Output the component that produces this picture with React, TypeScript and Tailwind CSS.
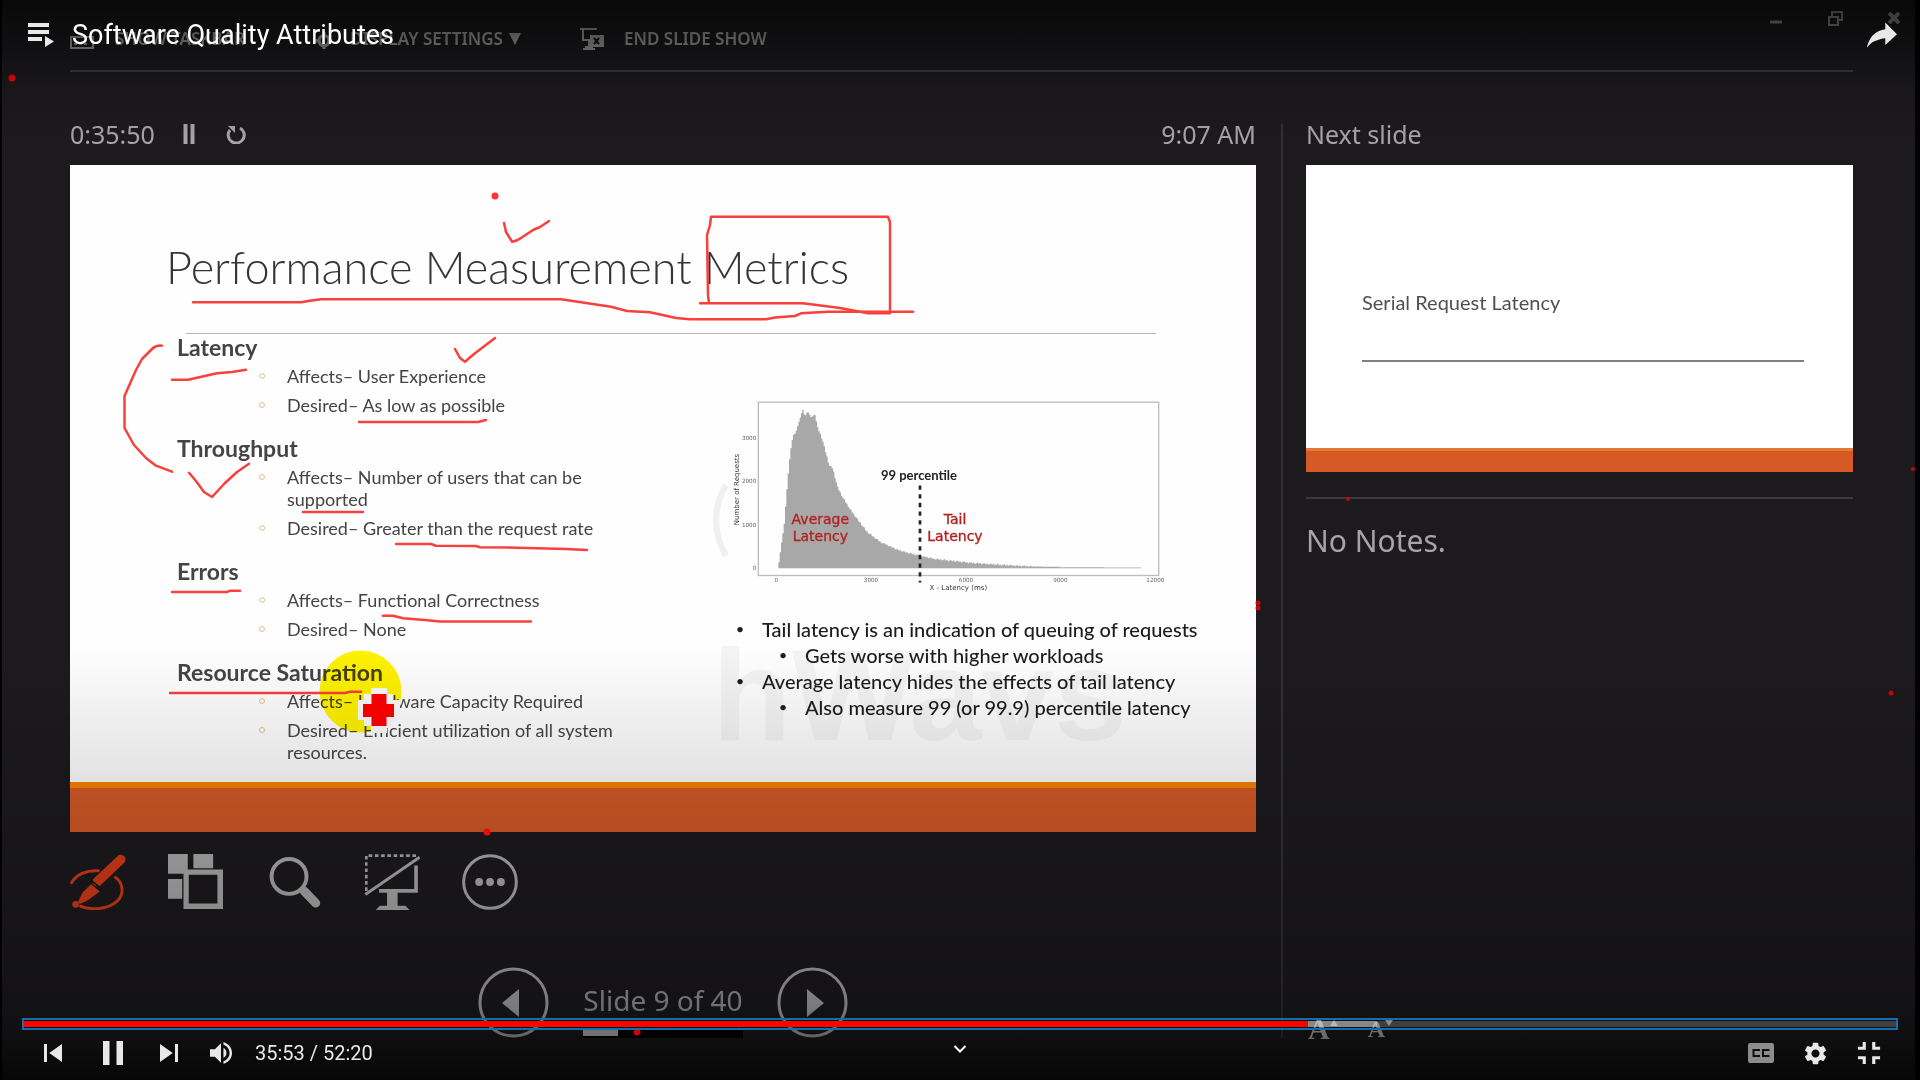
import React from "react";
import { MdFullscreenExit, MdSettings } from "react-icons/md";

const metrics = [
  { name: "Latency", items: ["Affects– User Experience", "Desired– As low as possible"] },
  { name: "Throughput", items: ["Affects– Number of users that can be supported", "Desired– Greater than the request rate"] },
  { name: "Errors", items: ["Affects– Functional Correctness", "Desired– None"] },
  { name: "Resource Saturation", items: ["Affects– Hardware Capacity Required", "Desired– Efficient utilization of all system resources."] },
];

const inkStrokes = [
  "M504 223L506 232L512 241.7Q517 241 521 238L533 230L540 227L549 221",
  "M193 302.3H301L308 301L321 299.3H561L611 306.7L627 311L650 312.3L676 318L690 319.3H766L775 317.5L795 316L801 313.3L828 311.7H913",
  "M700 303.3H803L840 308L868 313.3H890V222L888 216.7H711L710 225L707 235L708 295L709 303",
  "M455 349L460 358L465 361.7L474 354L495 338",
  "M172 379.7H188L217 373.3L232 372L246 369.7",
  "M162 345.7Q156 345 152 349L142 359L136 370L124.5 396V428L134 445L146 458L156 465.7L172 471.7",
  "M359 422H478L486 420",
  "M189 472.7L196 481L204 492L212 497L225 483L237 472L249 463.7",
  "M303 512H363",
  "M396 544H431L436 545.7L476 546L480 547.3L517 547.7L566 549L587 550",
  "M172 592H227L230 590.7H240",
  "M383 615.7H393L403 618.3L425 620L440 621.5H531",
  "M170 693H345L350 691.7H361",
];

const curve: [number, number][] = [
  [234, 545], [240, 500], [250, 430], [260, 300], [268, 215], [276, 165], [284, 158], [292, 130], [302, 98], [306, 88], [312, 108],
  [320, 92], [330, 110], [342, 103], [350, 140], [365, 180], [385, 255], [395, 263], [410, 320], [425, 350], [450, 390],
  [480, 430], [500, 455], [540, 485], [590, 508], [640, 522], [700, 535], [800, 546], [900, 553], [1000, 558], [1100, 560], [1320, 561],
];

function heightAt(x: number) {
  const i = curve.findIndex((p) => p[0] >= x);
  if (i <= 0) return curve[0][1];
  const [x0, y0] = curve[i - 1];
  const [x1, y1] = curve[i];
  return y0 + ((x - x0) / (x1 - x0)) * (y1 - y0);
}

function histogramPath() {
  let d = "M234 563";
  for (let x = 234; x < 1320; x += 4) {
    const wobble = x > 350 && x < 1000 ? ((x * 7) % 5) - 2 : 0;
    d += `V${Math.round(heightAt(x) + wobble)}H${x + 4}`;
  }
  return d + "V563Z";
}

function LatencyChart() {
  return (
    <svg viewBox="80 50 1320 590" className="block h-[197px] w-[440px]" role="img" aria-label="Latency histogram">
      <rect x="174" y="65" width="1201" height="520" fill="none" stroke="#bdbdbd" strokeWidth="4" />
      <path d={histogramPath()} fill="#a9a8a9" />
      <path d="M659 315V606" stroke="#222" strokeWidth="8" strokeDasharray="13 13" />
      <g fontFamily="DejaVu Sans" fontSize="17" fill="#666">
        <g textAnchor="end">
          <text x="168" y="178">3000</text>
          <text x="168" y="308">2000</text>
          <text x="168" y="439">1000</text>
          <text x="168" y="569">0</text>
        </g>
        <g textAnchor="middle">
          <text x="228" y="605">0</text>
          <text x="512" y="605">3000</text>
          <text x="797" y="605">6000</text>
          <text x="1080" y="605">9000</text>
          <text x="1365" y="605">12000</text>
        </g>
      </g>
      <g fontFamily="DejaVu Sans" fontSize="21" fill="#333" textAnchor="middle">
        <text x="774" y="628">X - Latency (ms)</text>
        <text transform="translate(117 327) rotate(-90)">Number of Requests</text>
      </g>
      <text x="656" y="297" textAnchor="middle" fontFamily="Lato" fontWeight="700" fontSize="39" fill="#222">99 percentile</text>
      <g fontFamily="DejaVu Sans" fontSize="42" fill="#b3201f" stroke="#b3201f" strokeWidth="1" textAnchor="middle">
        <text x="360" y="431">Average</text>
        <text x="360" y="482">Latency</text>
        <text x="764" y="431">Tail</text>
        <text x="764" y="482">Latency</text>
      </g>
    </svg>
  );
}

function Takeaway({ nested, children }: { nested?: boolean; children: React.ReactNode }) {
  return (
    <li className={nested ? "flex pl-[52px]" : "flex pl-[9px]"}>
      <span className="w-[26px] shrink-0 text-[14px]">•</span>
      <span className="whitespace-nowrap">{children}</span>
    </li>
  );
}

function CurrentSlide() {
  return (
    <article className="relative flex min-h-[667px] flex-col bg-[#fefefe] font-['Lato',sans-serif] text-[#444346]">
      <svg viewBox="70 165 1186 667" className="absolute inset-0 h-full w-full" aria-hidden="true">
        <path d="M726 485Q706 520 726 556" fill="none" stroke="#f0f0f0" strokeWidth="6" />
        <text x="712" y="740" fontFamily="Liberation Sans" fontWeight="700" fontSize="130" fill="#f4f4f4">hWavs</text>
      </svg>
      <div className="relative flex flex-1 flex-col pt-[72px]">
        <h1 className="pl-[96px] text-[45px] leading-[60px] font-light text-[#353437]">Performance Measurement Metrics</h1>
        <hr className="mt-[36px] mr-[100px] -mb-px ml-[116px] border-t border-[#b5b5b5]" />
        <div className="grid grid-cols-[657fr_529fr]">
          <div className="pl-[107px]">
            {metrics.map((m) => (
              <section key={m.name} className="mb-[18px]">
                <h2 className="mb-1 text-[23px] leading-7 font-bold">{m.name}</h2>
                <ul className="flex flex-col gap-[7px]">
                  {m.items.map((item) => (
                    <li key={item} className="flex text-[18px] leading-[22px]">
                      <span className="mt-2 mr-[22px] ml-[82px] size-[6px] shrink-0 rounded-full border border-[#e3bf93]" />
                      <span className="max-w-[345px]">{item}</span>
                    </li>
                  ))}
                </ul>
              </section>
            ))}
          </div>
          <div className="pt-16">
            <LatencyChart />
            <ul className="mt-[22px] text-[20px] leading-[26px] font-medium text-[#1c1c1c]">
              <Takeaway>Tail latency is an indication of queuing of requests</Takeaway>
              <Takeaway nested>Gets worse with higher workloads</Takeaway>
              <Takeaway>Average latency hides the effects of tail latency</Takeaway>
              <Takeaway nested>Also measure 99 (or 99.9) percentile latency</Takeaway>
            </ul>
          </div>
        </div>
      </div>
      <div className="h-[50px] border-t-[6px] border-[#fb8200] bg-[#d65a28]" />
      <svg viewBox="70 165 1186 667" className="absolute inset-0 h-full w-full mix-blend-multiply" aria-hidden="true">
        <circle cx="360.500" cy="691.500" r="41" fill="#fff200" />
      </svg>
      <svg viewBox="70 165 1186 667" className="absolute inset-0 h-full w-full" aria-hidden="true">
        <g fill="none" stroke="#f8403c" strokeWidth="2.500" strokeLinecap="round" strokeLinejoin="round">
          {inkStrokes.map((d) => (
            <path key={d} d={d} />
          ))}
        </g>
        <path d="M371 688h16v6h6v6h7v20h-7v6h-6v7h-16v-7h-7v-6h-6v-20h6v-6h7z" fill="#fafafa" />
        <path d="M371.500 694h15v10h7.500v13h-7.500v9h-15v-9h-8.500v-13h8.500z" fill="#ff0000" />
      </svg>
    </article>
  );
}

function SlideTools() {
  const button = "size-14";
  return (
    <div className="mt-[22px] flex gap-[42px] text-[#b0b0b0]">
      <button className={button} aria-label="Pen and laser pointer tools">
        <svg viewBox="0 0 170 170" className="size-full" fill="none" stroke="#db3c17">
          <path d="M5 87C18 62 50 48 86 51M138 71C164 90 164 124 142 144C116 168 66 172 32 158" strokeWidth="9" strokeLinecap="round" />
          <path d="M154 17L83 84" strokeWidth="29" strokeLinecap="round" />
          <path d="M64 92L90 114L56 140L30 152L24 146L38 117Z" fill="#db3c17" stroke="none" />
          <path d="M62 78L98 108" stroke="#171618" strokeWidth="5" />
          <circle cx="17" cy="153" r="10" fill="#db3c17" stroke="none" />
        </svg>
      </button>
      <button className={button} aria-label="See all slides">
        <svg viewBox="0 0 170 170" className="size-full" fill="currentColor">
          <path d="M0 0h60v60H0zM77 0h60v43H77zM0 76h43v60H0z" />
          <path fillRule="evenodd" d="M47 47h120v120H47zM63 63v87h87V63z" />
        </svg>
      </button>
      <button className={button} aria-label="Zoom into the slide">
        <svg viewBox="0 0 170 170" className="size-full" fill="none" stroke="currentColor">
          <circle cx="70" cy="68" r="53" strokeWidth="12" />
          <path d="M107 104L118 115" strokeWidth="16" />
          <path d="M116 113L151 149" strokeWidth="27" strokeLinecap="round" />
        </svg>
      </button>
      <button className={button} aria-label="Black or unblack slide show">
        <svg viewBox="0 0 170 170" className="size-full" fill="none" stroke="currentColor">
          <path d="M7 112V5H158" strokeWidth="8" strokeDasharray="11 8" />
          <path d="M4 123L169 10" strokeWidth="9" />
          <path d="M158 35V112H46" strokeWidth="11" />
          <path d="M70 112h32v45h24l12 13H36l12-13h22z" fill="currentColor" stroke="none" />
        </svg>
      </button>
      <button className={button} aria-label="More slide show options">
        <svg viewBox="0 0 170 170" className="size-full" fill="currentColor">
          <circle cx="85" cy="85" r="80" fill="none" stroke="currentColor" strokeWidth="9" />
          <circle cx="52" cy="85" r="12" />
          <circle cx="85" cy="85" r="12" />
          <circle cx="118" cy="85" r="12" />
        </svg>
      </button>
    </div>
  );
}

function PresenterToolbar() {
  const item = "flex items-center text-[17px] leading-6 font-semibold";
  return (
    <header className="flex h-[72px] justify-between border-b-2 border-[#3f3f3f] text-[#a8a8a8]">
      <div className="flex pt-[27px]">
        <button className={`${item} h-6 w-[244px] gap-[21px]`}>
          <svg viewBox="0 0 24 24" className="size-6" fill="none" stroke="currentColor" strokeWidth="2">
            <path d="M1 10h22v11H1zM4 17h3M9 17h3M14 17h3" />
          </svg>
          SHOW TASKBAR
        </button>
        <button className={`${item} h-6 w-[266px] gap-[16px]`}>
          <svg viewBox="0 0 24 24" className="size-5" fill="none" stroke="currentColor" strokeWidth="4">
            <circle cx="12" cy="14" r="6" />
            <path d="M12 4v4M12 20v4M2 14h4M18 14h4" />
          </svg>
          <span className="flex items-center gap-[6px]">
            DISPLAY SETTINGS
            <svg viewBox="0 0 12 12" className="size-3" fill="currentColor"><path d="M0 0h12L6 12z" /></svg>
          </span>
        </button>
        <button className={`${item} h-6 gap-[20px]`}>
          <svg viewBox="0 0 24 24" className="size-6" fill="none" stroke="currentColor" strokeWidth="2">
            <path d="M0 2h17M3 3v10h7M9 13v7M3 22h12M5 20h8" />
            <rect x="11" y="9" width="12" height="10" fill="currentColor" />
            <path d="M14 11l5 6M19 11l-5 6" stroke="#111" />
          </svg>
          END SLIDE SHOW
        </button>
      </div>
      <div className="-mr-[47px] flex gap-[47px] pt-3 text-[#959595]">
        <button className="h-3 w-3" aria-label="Minimize">
          <svg viewBox="0 0 12 12" className="size-3"><path d="M0 10h12" stroke="currentColor" strokeWidth="3" /></svg>
        </button>
        <button className="h-3 w-3" aria-label="Restore">
          <svg viewBox="0 0 12 12" className="size-3 overflow-visible" fill="none" stroke="currentColor" strokeWidth="2">
            <path d="M0 5h9v8H0zM3 4V0h10v8h-3" />
          </svg>
        </button>
        <button className="h-3 w-3" aria-label="Close">
          <svg viewBox="0 0 12 12" className="size-3"><path d="M1 1l10 10M11 1L1 11" stroke="currentColor" strokeWidth="4" /></svg>
        </button>
      </div>
    </header>
  );
}

function NavButton({ label, d }: { label: string; d: string }) {
  return (
    <button aria-label={label} className="size-[71px] text-[#b5b5b5]">
      <svg viewBox="0 0 71 71" className="size-full">
        <circle cx="35.500" cy="35.500" r="33.500" fill="none" stroke="currentColor" strokeWidth="3" />
        <path d={d} fill="currentColor" />
      </svg>
    </button>
  );
}

function PresenterView() {
  return (
    <main className="col-start-1 row-start-1 flex flex-col border-r-[5px] border-l-2 border-black bg-[#1c1a1d] pr-[62px] pl-[68px] font-['Noto_Sans',sans-serif] text-[#a5a5a5]">
      <PresenterToolbar />
      <div className="mt-[52px] grid flex-1 grid-cols-[1186fr_597fr] pb-[42px]">
        <section>
          <div className="mb-[21px] flex h-5 items-center justify-between text-[25px] leading-5">
            <div className="flex items-center">
              <span className="w-[112px]">0:35:50</span>
              <button aria-label="Pause timer">
                <svg viewBox="0 0 14 20" className="h-5 w-[14px]"><path d="M3.500 0v20M10.500 0v20" stroke="currentColor" strokeWidth="4" /></svg>
              </button>
              <button aria-label="Restart timer" className="ml-[30px]">
                <svg viewBox="0 0 20 20" className="size-5" fill="none" stroke="currentColor" strokeWidth="3">
                  <path d="M14 4A8 8 0 1 1 4 6" />
                  <path d="M2 2h7v7z" fill="currentColor" stroke="none" />
                </svg>
              </button>
            </div>
            <span>9:07 AM</span>
          </div>
          <CurrentSlide />
          <SlideTools />
          <div className="mt-[57px] flex justify-center gap-[34px]">
            <NavButton label="Previous slide" d="M24 36L41 22V50Z" />
            <div className="flex flex-col text-[28px]">
              <p className="h-[62px] leading-[66px]">Slide 9 of 40</p>
              <div className="h-[9px] bg-black">
                <div className="h-[7px] w-[22%] bg-[#c8c8c8]" />
              </div>
            </div>
            <NavButton label="Next slide" d="M47 36L30 22V50Z" />
          </div>
        </section>
        <aside className="ml-[25px] flex flex-col border-l-2 border-[#333234] pl-[23px]">
          <h2 className="mb-[21px] text-[25px] leading-5">Next slide</h2>
          <article className="flex min-h-[307px] flex-col bg-white font-['Lato',sans-serif] text-[#505050]">
            <div className="flex-1 pt-[121px] pr-[49px] pl-[56px]">
              <p className="border-b-2 border-[#808080] pb-[42px] text-[20px] leading-[32px]">Serial Request Latency</p>
            </div>
            <div className="h-6 border-t-[3px] border-[#e27a35] bg-[#d65a25]" />
          </article>
          <hr className="mt-[25px] border-t-2 border-[#3a393b]" />
          <p className="mt-[22px] text-[30px] leading-10">No Notes.</p>
          <div className="mt-auto flex items-end gap-[30px] pl-[2px] font-['Liberation_Serif',serif] leading-[18px] font-bold text-[#c0c0c0]">
            <button className="flex text-[30px]" aria-label="Make the text larger">
              A
              <svg viewBox="0 0 8 6" className="h-[6px] w-2" fill="currentColor"><path d="M0 6L4 0L8 6Z" /></svg>
            </button>
            <button className="flex text-[24px]" aria-label="Make the text smaller">
              A
              <svg viewBox="0 0 8 6" className="h-[6px] w-2" fill="currentColor"><path d="M0 0L4 6L8 0Z" /></svg>
            </button>
          </div>
        </aside>
      </div>
    </main>
  );
}

function Scrim() {
  return (
    <div className="pointer-events-none relative col-start-1 row-start-1 bg-[linear-gradient(to_bottom,rgba(0,0,0,.68)_0%,rgba(0,0,0,.45)_4%,rgba(0,0,0,.15)_8%,rgba(0,0,0,0)_13%,rgba(0,0,0,0)_60%,rgba(0,0,0,.11)_72%,rgba(0,0,0,.2)_83%,rgba(0,0,0,.32)_93%,rgba(0,0,0,.45)_96%,rgba(0,0,0,.75)_100%)]">
      <svg viewBox="0 0 1920 1080" preserveAspectRatio="none" className="absolute inset-0 h-full w-full" fill="#c80505" aria-hidden="true">
        <circle cx="12" cy="78" r="3.500" />
        <circle cx="495" cy="196" r="3.500" fill="#ff3333" />
        <circle cx="487" cy="832" r="3.500" fill="#e80c0c" />
        <circle cx="637" cy="1032" r="3.500" />
        <circle cx="1258" cy="603" r="2.500" />
        <circle cx="1258" cy="608" r="2.500" />
        <circle cx="1348" cy="499" r="2" />
        <circle cx="1913" cy="469" r="2" />
        <circle cx="1891" cy="693" r="2.500" />
      </svg>
    </div>
  );
}

function PlayerChrome() {
  return (
    <div className="relative col-start-1 row-start-1 flex flex-col justify-between font-['Roboto',sans-serif] text-[#e8e8e8]">
      <div className="flex items-center justify-between pt-2 pr-[11px] pl-7">
        <div className="flex items-center gap-[18px]">
          <button aria-label="Playlist">
            <svg viewBox="0 0 26 26" className="size-[26px]" fill="currentColor">
              <path d="M0 1h21v4H0zM0 8h21v4H0zM0 15h14v4H0zM17 14v11l9-5.500z" />
            </svg>
          </button>
          <a href="#video" className="text-[27px] leading-10 text-white">Software Quality Attributes</a>
        </div>
        <button aria-label="Share">
          <svg viewBox="0 0 36 36" className="size-[54px]" fill="currentColor">
            <path d="m20.200 14.190 0-4.450 7.790 7.790-7.790 7.160 0-4.560C16.270 20.690 12.100 21.810 9.340 24.760 8.800 25.130 7.600 27.290 8.120 25.650 9.080 21.320 11.800 17.180 15.980 15.380c1.330-.6 2.760-.98 4.210-1.190z" />
          </svg>
        </button>
      </div>
      <div className="px-[22px]">
        <div className="flex items-center border-2 border-[#0f70ae] py-px">
          <input
            type="range"
            aria-label="Seek"
            min={0}
            max={3140}
            defaultValue={2153}
            className="m-0 block h-[6px] w-full appearance-none bg-[linear-gradient(to_right,#ff0000_68.6%,rgba(255,255,255,.5)_68.6%,rgba(255,255,255,.5)_72.3%,rgba(255,255,255,.2)_72.3%)] [&::-webkit-slider-thumb]:size-0 [&::-webkit-slider-thumb]:appearance-none"
          />
        </div>
        <div className="mb-1 grid h-[46px] grid-cols-[1fr_auto_1fr] items-center">
          <div className="flex items-center pl-[3px]">
            <button aria-label="Previous video" className="flex w-14 justify-center">
              <svg viewBox="12 12 12 12" className="size-[18px]" fill="currentColor"><path d="M12 12h2v12h-2zM15.500 18l8.500 6V12z" /></svg>
            </button>
            <button aria-label="Pause" className="flex w-16 justify-center">
              <svg viewBox="0 0 20 24" className="h-6 w-5" fill="currentColor"><path d="M0 0h6.500v24H0zM13.500 0H20v24h-6.500z" /></svg>
            </button>
            <button aria-label="Next video" className="flex w-12 justify-center">
              <svg viewBox="12 12 12 12" className="size-[18px]" fill="currentColor"><path d="M12 24l8.500-6L12 12zM22 12v12h2V12z" /></svg>
            </button>
            <button aria-label="Mute" className="flex w-14 justify-center">
              <svg viewBox="8 9 18 18" className="size-[22px]" fill="currentColor">
                <path d="M8 21h4l5 5V10l-5 5H8zM19 14v8c1.480-.68 2.500-2.230 2.500-4 0-1.740-1.020-3.260-2.500-4zM19 11.290c2.890.86 5 3.540 5 6.710s-2.110 5.850-5 6.710v2.060c4.010-.91 7-4.490 7-8.770s-2.990-7.860-7-8.770z" />
              </svg>
            </button>
            <span className="ml-[6px] text-[20px] leading-6">35:53 / 52:20</span>
          </div>
          <button aria-label="More videos" className="mb-2 text-white">
            <svg viewBox="0 0 14 10" className="h-[10px] w-[14px]" fill="none" stroke="currentColor" strokeWidth="2">
              <path d="M1.500 2L7 7.500L12.500 2" />
            </svg>
          </button>
          <div className="flex items-center justify-end pr-[2px]">
            <button aria-label="Subtitles" className="flex w-[54px] justify-center text-[#8c8c8c]">
              <svg viewBox="0 0 26 20" className="h-5 w-[26px]" fill="none">
                <rect width="26" height="20" rx="2" fill="currentColor" />
                <path d="M11 8V7H5.500v6H11v-1M20.500 8V7H15v6h5.500v-1" stroke="#0f0f0f" strokeWidth="2" />
              </svg>
            </button>
            <button aria-label="Settings" className="flex w-[54px] justify-center">
              <MdSettings className="size-[27px]" />
            </button>
            <button aria-label="Exit full screen" className="flex w-[54px] justify-center">
              <MdFullscreenExit className="size-[38px]" />
            </button>
          </div>
        </div>
      </div>
    </div>
  );
}

export default function App() {
  return (
    <div className="grid min-h-screen grid-cols-1 bg-black">
      <PresenterView />
      <Scrim />
      <PlayerChrome />
    </div>
  );
}
